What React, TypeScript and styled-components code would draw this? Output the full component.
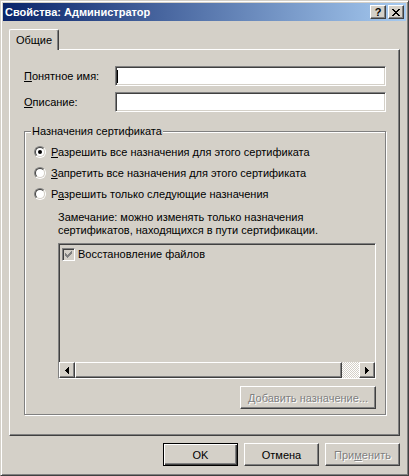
import React from 'react'
import styled, { createGlobalStyle, css } from 'styled-components'

const GlobalStyle = createGlobalStyle`
  html, body {
    margin: 0;
    padding: 0;
    background: #d4d0c8;
  }
  body {
    font-family: "Liberation Sans", Arial, sans-serif;
    font-size: 11px;
    color: #000;
  }
  * {
    box-sizing: border-box;
  }
`

// classic 3D edges
const raised = css`
  border: 1px solid;
  border-color: #fff #404040 #404040 #fff;
  box-shadow: inset -1px -1px #808080, inset 1px 1px #d4d0c8;
`

const sunken = css`
  border: 1px solid;
  border-color: #808080 #fff #fff #808080;
  box-shadow: inset 1px 1px #404040, inset -1px -1px #d4d0c8;
`

const Window = styled.div`
  width: 409px;
  height: 476px;
  display: flex;
  flex-direction: column;
  background: #d4d0c8;
  border: 1px solid;
  border-color: #d4d0c8 #404040 #404040 #d4d0c8;
  box-shadow: inset 1px 1px #fff, inset -1px -1px #808080;
  padding: 2px;
`

const TitleBar = styled.div`
  height: 18px;
  display: flex;
  align-items: center;
  padding: 0 2px;
  background: linear-gradient(to right, #0a246a, #a6caf0);
`

const TitleText = styled.div`
  flex: 1;
  color: #fff;
  font-weight: bold;
  line-height: 18px;
  white-space: nowrap;
`

const CaptionButtons = styled.div`
  display: flex;
  gap: 2px;
`

const CaptionButton = styled.div`
  ${raised};
  width: 16px;
  height: 14px;
  display: flex;
  align-items: center;
  justify-content: center;
  background: #d4d0c8;
  font-weight: bold;
  font-size: 11px;
  line-height: 12px;
  color: #000;
`

const Body = styled.div`
  flex: 1;
  display: flex;
  flex-direction: column;
  padding: 8px 6px 7px;
`

const TabStrip = styled.div`
  display: flex;
`

const Tab = styled.div`
  position: relative;
  z-index: 1;
  width: 50px;
  height: 21px;
  margin-bottom: -1px;
  display: flex;
  align-items: center;
  justify-content: center;
  padding-bottom: 1px;
  background: #d4d0c8;
  border-top: 1px solid #fff;
  border-left: 1px solid #fff;
  border-right: 1px solid #404040;
  border-radius: 2px 2px 0 0;
  box-shadow: inset -1px 0 #808080;
`

const TabPanel = styled.div`
  flex: 1;
  display: flex;
  flex-direction: column;
  border: 1px solid;
  border-color: #fff #404040 #404040 #fff;
  box-shadow: inset -1px -1px #808080;
  padding: 16px 13px 0 14px;
`

const FieldRow = styled.div`
  display: flex;
  align-items: center;
  height: 20px;
  & + & {
    margin-top: 6px;
  }
`

const FieldLabel = styled.div`
  width: 91px;
  line-height: 13px;
`

const EditBox = styled.div`
  ${sunken};
  flex: 1;
  height: 20px;
  display: flex;
  align-items: center;
  padding-left: 1px;
  background: #fff;
`

const Caret = styled.span`
  width: 1px;
  height: 13px;
  background: #000;
`

const AccessKey = styled.span`
  text-decoration: underline;
`

const GroupBox = styled.div`
  position: relative;
  margin-top: 19px;
  border: 1px solid #808080;
  box-shadow: inset 1px 1px #fff, 1px 1px 0 #fff;
  padding: 9px 9px 5px 9px;
  display: flex;
  flex-direction: column;
`

const GroupLabel = styled.span`
  position: absolute;
  top: -7px;
  left: 6px;
  padding: 0 1px;
  line-height: 13px;
  background: #d4d0c8;
`

const RadioRow = styled.div`
  height: 21px;
  display: flex;
  align-items: center;
  gap: 5px;
`

const RadioOuter = styled.span`
  width: 12px;
  height: 12px;
  border-radius: 50%;
  border: 1px solid;
  border-color: #808080 #fff #fff #808080;
  display: flex;
`

const RadioInner = styled.span`
  flex: 1;
  border-radius: 50%;
  border: 1px solid;
  border-color: #404040 #d4d0c8 #d4d0c8 #404040;
  background: #fff;
  display: flex;
  align-items: center;
  justify-content: center;
`

const RadioDot = styled.span`
  width: 4px;
  height: 4px;
  border-radius: 50%;
  background: #000;
`

const Indented = styled.div`
  margin-left: 24px;
  display: flex;
  flex-direction: column;
`

const Note = styled.div`
  margin-top: 7px;
  line-height: 13px;
`

const ListBox = styled.div`
  ${sunken};
  margin-top: 6px;
  height: 136px;
  background: #d4d0c8;
  display: flex;
  flex-direction: column;
`

const ListItems = styled.div`
  flex: 1;
  padding: 4px 3px;
`

const ListItem = styled.div`
  display: flex;
  align-items: center;
  gap: 3px;
  height: 13px;
  line-height: 13px;
`

const CheckBox = styled.span`
  ${sunken};
  width: 13px;
  height: 13px;
  background: #d4d0c8;
  display: flex;
  align-items: center;
  justify-content: center;
`

const ScrollBar = styled.div`
  height: 16px;
  display: flex;
`

const ScrollButton = styled.div`
  ${raised};
  width: 16px;
  height: 16px;
  display: flex;
  align-items: center;
  justify-content: center;
  background: #d4d0c8;
`

const ScrollThumb = styled.div`
  ${raised};
  width: 267px;
  height: 16px;
  background: #d4d0c8;
`

const ScrollTrack = styled.div`
  flex: 1;
  background: repeating-conic-gradient(#fff 0 25%, #d4d0c8 0 50%) 0 0 / 2px 2px;
`

const PushButton = styled.button<{ $default?: boolean; $width?: number }>`
  width: ${(p) => p.$width ?? 75}px;
  height: 23px;
  padding: 0;
  margin: 0;
  background: #d4d0c8;
  font-family: inherit;
  font-size: 11px;
  color: #000;
  ${(p) =>
    p.$default
      ? css`
          border: 1px solid #000;
          box-shadow: inset 1px 1px #fff, inset -1px -1px #404040, inset -2px -2px #808080;
        `
      : raised};

  &:disabled {
    color: #808080;
    text-shadow: 1px 1px 0 #fff;
  }
`

const AddButton = styled(PushButton)`
  align-self: flex-end;
  margin-top: 7px;
`

const ButtonRow = styled.div`
  display: flex;
  justify-content: flex-end;
  gap: 6px;
  margin-top: 7px;
`

const CloseGlyph = () => (
  <svg width="8" height="7" viewBox="0 0 8 7" shapeRendering="crispEdges">
    <path
      fill="#000"
      d="M0 0h2v1H0zM6 0h2v1H6zM1 1h2v1H1zM5 1h2v1H5zM2 2h4v1H2zM3 3h2v1H3zM2 4h4v1H2zM1 5h2v1H1zM5 5h2v1H5zM0 6h2v1H0zM6 6h2v1H6z"
    />
  </svg>
)

const ArrowGlyph = ({ dir }: { dir: 'left' | 'right' }) => (
  <svg
    width="4"
    height="7"
    viewBox="0 0 4 7"
    shapeRendering="crispEdges"
    style={{ transform: dir === 'right' ? 'scaleX(-1)' : undefined }}
  >
    <path fill="#000" d="M0 3h1v1H0zM1 2h1v3H1zM2 1h1v5H2zM3 0h1v7H3z" />
  </svg>
)

const CheckGlyph = () => (
  <svg width="7" height="7" viewBox="0 0 7 7" shapeRendering="crispEdges">
    <path
      fill="#808080"
      d="M0 2h1v3H0zM1 3h1v3H1zM2 4h1v3H2zM3 3h1v3H3zM4 2h1v3H4zM5 1h1v3H5zM6 0h1v3H6z"
    />
  </svg>
)

const Radio = ({ checked, children }: { checked?: boolean; children: React.ReactNode }) => (
  <RadioRow>
    <RadioOuter>
      <RadioInner>{checked && <RadioDot />}</RadioInner>
    </RadioOuter>
    <span>{children}</span>
  </RadioRow>
)

export default function App() {
  return (
    <>
      <GlobalStyle />
      <Window>
        <TitleBar>
          <TitleText>Свойства: Администратор</TitleText>
          <CaptionButtons>
            <CaptionButton>?</CaptionButton>
            <CaptionButton>
              <CloseGlyph />
            </CaptionButton>
          </CaptionButtons>
        </TitleBar>

        <Body>
          <TabStrip>
            <Tab>Общие</Tab>
          </TabStrip>

          <TabPanel>
            <FieldRow>
              <FieldLabel>
                <AccessKey>П</AccessKey>онятное имя:
              </FieldLabel>
              <EditBox>
                <Caret />
              </EditBox>
            </FieldRow>
            <FieldRow>
              <FieldLabel>
                <AccessKey>О</AccessKey>писание:
              </FieldLabel>
              <EditBox />
            </FieldRow>

            <GroupBox>
              <GroupLabel>Назначения сертификата</GroupLabel>
              <Radio checked>
                <AccessKey>Р</AccessKey>азрешить все назначения для этого сертификата
              </Radio>
              <Radio>
                <AccessKey>З</AccessKey>апретить все назначения для этого сертификата
              </Radio>
              <Radio>
                Р<AccessKey>а</AccessKey>зрешить только следующие назначения
              </Radio>

              <Indented>
                <Note>
                  Замечание: можно изменять только назначения
                  <br />
                  сертификатов, находящихся в пути сертификации.
                </Note>
                <ListBox>
                  <ListItems>
                    <ListItem>
                      <CheckBox>
                        <CheckGlyph />
                      </CheckBox>
                      <span>Восстановление файлов</span>
                    </ListItem>
                  </ListItems>
                  <ScrollBar>
                    <ScrollButton>
                      <ArrowGlyph dir="left" />
                    </ScrollButton>
                    <ScrollThumb />
                    <ScrollTrack />
                    <ScrollButton>
                      <ArrowGlyph dir="right" />
                    </ScrollButton>
                  </ScrollBar>
                </ListBox>
                <AddButton $width={136} disabled>
                  <AccessKey>Д</AccessKey>обавить назначение...
                </AddButton>
              </Indented>
            </GroupBox>
          </TabPanel>

          <ButtonRow>
            <PushButton $default>OK</PushButton>
            <PushButton>Отмена</PushButton>
            <PushButton disabled>
              При<AccessKey>м</AccessKey>енить
            </PushButton>
          </ButtonRow>
        </Body>
      </Window>
    </>
  )
}
